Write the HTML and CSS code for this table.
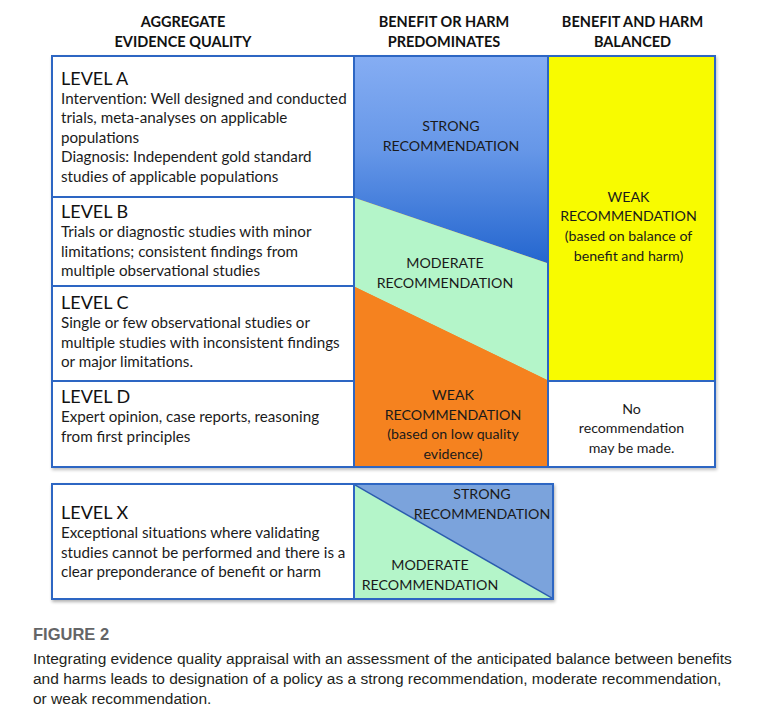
FILE: index.html
```html
<!DOCTYPE html>
<html lang="en">
<head>
<meta charset="utf-8">
<title>Figure 2</title>
<link rel="stylesheet" href="styles.css">
</head>
<body>
<div class="page">
  <div class="headers">
    <div class="hd hd-quality">AGGREGATE<br>EVIDENCE QUALITY</div>
    <div class="hd hd-pred">BENEFIT OR HARM<br>PREDOMINATES</div>
    <div class="hd hd-bal">BENEFIT AND HARM<br>BALANCED</div>
  </div>

  <div class="grid">
    <div class="lvl lvl-a">
      <div class="lvl-title">LEVEL A</div>
      <div class="lvl-text">Intervention: Well designed and conducted trials, meta-analyses on applicable populations<br>Diagnosis: Independent gold standard studies of applicable populations</div>
    </div>
    <div class="lvl lvl-b">
      <div class="lvl-title">LEVEL B</div>
      <div class="lvl-text">Trials or diagnostic studies with minor limitations; consistent findings from multiple observational studies</div>
    </div>
    <div class="lvl lvl-c">
      <div class="lvl-title">LEVEL C</div>
      <div class="lvl-text">Single or few observational studies or multiple studies with inconsistent findings or major limitations.</div>
    </div>
    <div class="lvl lvl-d">
      <div class="lvl-title">LEVEL D</div>
      <div class="lvl-text">Expert opinion, case reports, reasoning from first principles</div>
    </div>

    <div class="pred">
      <svg class="pred-bg" viewBox="0 0 192 409" preserveAspectRatio="none">
        <defs>
          <linearGradient id="blueGrad" x1="0" y1="0" x2="0" y2="1">
            <stop offset="0" stop-color="#85adf3"/>
            <stop offset="0.45" stop-color="#6697e8"/>
            <stop offset="1" stop-color="#2466cf"/>
          </linearGradient>
        </defs>
        <polygon points="0,0 192,0 192,206 0,141" fill="url(#blueGrad)"/>
        <polygon points="0,141 192,206 192,323 0,230" fill="#b4f5c9"/>
        <polygon points="0,230 192,323 192,409 0,409" fill="#f5821f"/>
      </svg>
      <div class="lbl lbl-strong">STRONG<br>RECOMMENDATION</div>
      <div class="lbl lbl-moderate">MODERATE<br>RECOMMENDATION</div>
      <div class="lbl lbl-weak">WEAK<br>RECOMMENDATION<br>(based on low quality<br>evidence)</div>
    </div>

    <div class="bal-weak">WEAK<br>RECOMMENDATION<br>(based on balance of<br>benefit and harm)</div>
    <div class="bal-none">No<br>recommendation<br>may be made.</div>
  </div>

  <div class="xbox">
    <div class="lvl lvl-x">
      <div class="lvl-title">LEVEL X</div>
      <div class="lvl-text">Exceptional situations where validating studies cannot be performed and there is a clear preponderance of benefit or harm</div>
    </div>
    <div class="xpred">
      <svg class="pred-bg" viewBox="0 0 197 113" preserveAspectRatio="none">
        <polygon points="0,0 197,113 0,113" fill="#b4f5c9"/>
        <polygon points="0,0 197,0 197,113" fill="#7ba3dc"/>
        <line x1="0" y1="0" x2="197" y2="113" stroke="#2b5cae" stroke-width="1.5" vector-effect="non-scaling-stroke"/>
      </svg>
      <div class="lbl xlbl-strong">STRONG<br>RECOMMENDATION</div>
      <div class="lbl xlbl-moderate">MODERATE<br>RECOMMENDATION</div>
    </div>
  </div>

  <div class="caption">
    <div class="cap-title">FIGURE 2</div>
    <div class="cap-text">Integrating evidence quality appraisal with an assessment of the anticipated balance between benefits<br>and harms leads to designation of a policy as a strong recommendation, moderate recommendation,<br>or weak recommendation.</div>
  </div>
</div>
</body>
</html>
```

FILE: styles.css
```css
html, body {
  margin: 0;
  padding: 0;
  background: #ffffff;
}

body {
  font-family: Lato, "Open Sans", sans-serif;
  color: #1b1b1b;
}

.page {
  width: 762px;
  height: 714px;
  overflow: hidden;
}

/* column headers */
.headers {
  display: grid;
  grid-template-columns: 304px 194px 167px;
  margin-left: 51px;
  padding-top: 12px;
  height: 55px;
  box-sizing: border-box;
}

.hd {
  font-weight: 700;
  font-size: 14.5px;
  line-height: 20px;
  text-align: center;
  color: #111;
}

.hd-quality { padding-right: 40px; }
.hd-pred { padding-right: 16px; }

/* main grid */
.grid {
  display: grid;
  grid-template-columns: 300px 192px 165px;
  grid-template-rows: 139px 87px 93px 84px;
  gap: 2px;
  border: 2px solid #2d66c3;
  background: #2d66c3;
  width: max-content;
  margin-left: 51px;
  box-shadow: 1px 2px 3px rgba(0, 0, 0, 0.25);
}

.lvl {
  background: #ffffff;
  padding: 2px 2px 0 8px;
  display: flex;
  flex-direction: column;
}

.lvl-title {
  font-size: 18px;
  line-height: 22px;
  color: #111;
}

.lvl-text {
  font-size: 15.2px;
  line-height: 19.6px;
  color: #1b1b1b;
}

.lvl-a { grid-column: 1; grid-row: 1; justify-content: center; padding-top: 0; }
.lvl-b { grid-column: 1; grid-row: 2; }
.lvl-c { grid-column: 1; grid-row: 3; padding-top: 4px; }
.lvl-d { grid-column: 1; grid-row: 4; padding-top: 3px; }

.pred {
  grid-column: 2;
  grid-row: 1 / span 4;
  position: relative;
  background: #f5821f;
}

.pred-bg {
  position: absolute;
  left: 0;
  top: 0;
  width: 100%;
  height: 100%;
  display: block;
}

.lbl {
  position: absolute;
  text-align: center;
  font-size: 14.2px;
  line-height: 19.6px;
  color: #1a1a1a;
  white-space: nowrap;
}

.lbl-strong { top: 59px; left: 0; right: 0; }
.lbl-moderate { top: 196px; left: 0; right: 12px; }
.lbl-weak { top: 328px; left: 4px; right: 0; }

.bal-weak {
  grid-column: 3;
  grid-row: 1 / span 3;
  background: #f8fb00;
  display: flex;
  flex-direction: column;
  justify-content: center;
  text-align: center;
  padding: 15px 6px 0 0;
  font-size: 14.2px;
  line-height: 19.6px;
}

.bal-none {
  grid-column: 3;
  grid-row: 4;
  background: #ffffff;
  display: flex;
  flex-direction: column;
  justify-content: center;
  text-align: center;
  padding-top: 8px;
  font-size: 14.2px;
  line-height: 19.6px;
}

/* level X */
.xbox {
  display: grid;
  grid-template-columns: 300px 197px;
  grid-template-rows: 113px;
  gap: 2px;
  border: 2px solid #2d66c3;
  background: #2d66c3;
  width: max-content;
  margin: 15px 0 0 51px;
  box-shadow: 1px 2px 3px rgba(0, 0, 0, 0.3);
}

.lvl-x { justify-content: center; padding-top: 0; }

.xpred {
  position: relative;
  background: #b4f5c9;
}

.xlbl-strong { top: -1px; left: 57px; right: 0; }
.xlbl-moderate { top: 70px; left: 0; right: 47px; }

/* caption */
.caption {
  margin: 24px 0 0 33px;
}

.cap-title {
  font-family: "Liberation Sans", Arial, sans-serif;
  font-weight: 700;
  font-size: 16.5px;
  line-height: 20px;
  color: #646567;
  margin-bottom: 5px;
}

.cap-text {
  font-family: "Liberation Sans", Arial, sans-serif;
  font-size: 15.5px;
  line-height: 20px;
  color: #231f20;
  white-space: nowrap;
}
```
